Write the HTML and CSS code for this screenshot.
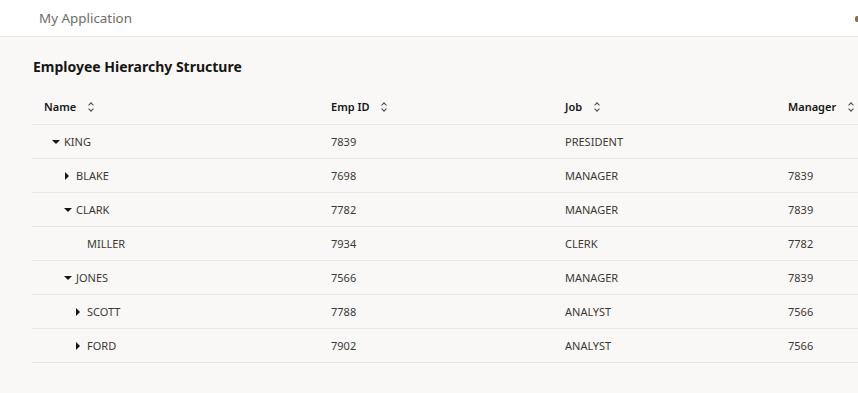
FILE: index.html
```html
<!DOCTYPE html>
<html>
  <head>
    <title>My Application</title>
    <link rel="stylesheet" href="styles.css">
  </head>
  <body>

    <div class="app-header">
      <span class="app-name">My Application</span>
      <span class="user-menu"></span>
    </div>

    <div class="content">
      <h1>Employee Hierarchy Structure</h1>

      <table class="tree-table">
        <colgroup>
          <col class="col-name">
          <col class="col-id">
          <col class="col-job">
          <col class="col-mgr">
        </colgroup>
        <thead>
          <tr>
            <th>Name <span class="sort"></span></th>
            <th>Emp ID <span class="sort"></span></th>
            <th>Job <span class="sort"></span></th>
            <th>Manager <span class="sort"></span></th>
          </tr>
        </thead>
        <tbody>
          <tr>
            <td><span class="level-0"><span class="toggle open"></span>KING</span></td>
            <td>7839</td><td>PRESIDENT</td><td></td>
          </tr>
          <tr>
            <td><span class="level-1"><span class="toggle closed"></span>BLAKE</span></td>
            <td>7698</td><td>MANAGER</td><td>7839</td>
          </tr>
          <tr>
            <td><span class="level-1"><span class="toggle open"></span>CLARK</span></td>
            <td>7782</td><td>MANAGER</td><td>7839</td>
          </tr>
          <tr>
            <td><span class="level-2"><span class="toggle"></span>MILLER</span></td>
            <td>7934</td><td>CLERK</td><td>7782</td>
          </tr>
          <tr>
            <td><span class="level-1"><span class="toggle open"></span>JONES</span></td>
            <td>7566</td><td>MANAGER</td><td>7839</td>
          </tr>
          <tr>
            <td><span class="level-2"><span class="toggle closed"></span>SCOTT</span></td>
            <td>7788</td><td>ANALYST</td><td>7566</td>
          </tr>
          <tr>
            <td><span class="level-2"><span class="toggle closed"></span>FORD</span></td>
            <td>7902</td><td>ANALYST</td><td>7566</td>
          </tr>
        </tbody>
      </table>
    </div>

  </body>
</html>
```

FILE: styles.css
```css
body {
  margin: 0;
  background-color: #f9f8f6;
  color: #161513;
  font-family: "Noto Sans", "Open Sans", sans-serif;
  overflow: hidden;
}

.app-header {
  height: 36px;
  background-color: #ffffff;
  border-bottom: 1px solid #ebe9e6;
  display: flex;
  align-items: center;
  justify-content: space-between;
  padding: 0 0 0 39px;
}

.app-name {
  font-size: 13.4px;
  color: #6f6c68;
}

.user-menu {
  width: 3px;
  height: 6px;
  background-color: #8a6d4a;
  border-radius: 2px 0 0 2px;
  margin-top: 2px;
}

.content {
  padding: 19px 0 0 32px;
}

h1 {
  margin: 0 0 12px 1px;
  font-size: 14px;
  font-weight: 700;
  line-height: 21px;
}

.tree-table {
  border-collapse: collapse;
  width: 826px;
  font-size: 11px;
  table-layout: fixed;
}

.col-name { width: 287px; }
.col-id { width: 234px; }
.col-job { width: 223px; }
.col-mgr { width: 82px; }

.tree-table th {
  text-align: left;
  font-weight: 600;
  height: 35px;
  padding: 0 12px;
  border-bottom: 1px solid #e8e6e3;
  color: #161513;
  white-space: nowrap;
}

.tree-table th:last-child,
.tree-table td:last-child {
  padding-right: 0;
}

.tree-table td {
  height: 33px;
  padding: 0 12px;
  border-bottom: 1px solid #e8e6e3;
  color: #3a3835;
}

.sort {
  display: inline-block;
  position: relative;
  width: 7px;
  height: 10px;
  margin-left: 9px;
  vertical-align: -1px;
}

.sort::before,
.sort::after {
  content: "";
  position: absolute;
  left: 1px;
  width: 3px;
  height: 3px;
  border-left: 1.3px solid #4a4844;
  border-top: 1.3px solid #4a4844;
}

.sort::before {
  top: 1px;
  transform: rotate(45deg);
}

.sort::after {
  bottom: 1px;
  transform: rotate(-135deg);
}

.level-0,
.level-1,
.level-2 {
  display: flex;
  align-items: center;
}

.level-1 { padding-left: 12px; }
.level-2 { padding-left: 23px; }

.toggle {
  width: 16px;
  height: 12px;
  padding-left: 4px;
  display: flex;
  align-items: center;
  justify-content: center;
  flex-shrink: 0;
}

.toggle.open::before {
  content: "";
  border-left: 4px solid transparent;
  border-right: 4px solid transparent;
  border-top: 4px solid #161513;
}

.toggle.closed::before {
  content: "";
  border-top: 4px solid transparent;
  border-bottom: 4px solid transparent;
  border-left: 4px solid #161513;
  margin-left: -2px;
}
```
